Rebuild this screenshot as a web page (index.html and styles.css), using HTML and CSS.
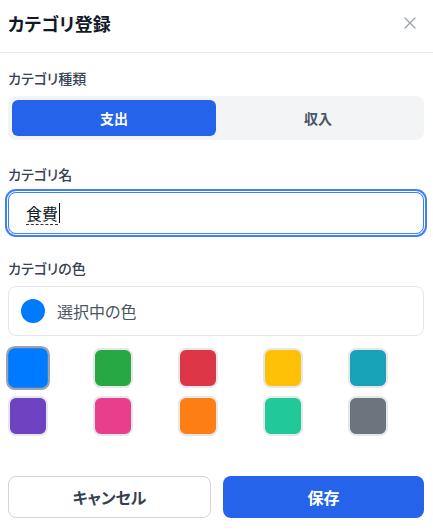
FILE: index.html
```html
<!DOCTYPE html>
<html lang="ja">
<head>
<meta charset="utf-8">
<title>カテゴリ登録</title>
<link rel="stylesheet" href="styles.css">
</head>
<body>
<div class="modal">
  <header class="modal-header">
    <h2 class="modal-title">カテゴリ登録</h2>
    <button class="close-btn" aria-label="閉じる">
      <svg width="12" height="12" viewBox="0 0 12 12"><path d="M1 1 L11 11 M11 1 L1 11" stroke="#9ca3af" stroke-width="1.4" fill="none" stroke-linecap="round"/></svg>
    </button>
  </header>
  <div class="modal-body">
    <section class="field">
      <div class="label">カテゴリ種類</div>
      <div class="segment">
        <button class="seg-btn active">支出</button>
        <button class="seg-btn">収入</button>
      </div>
    </section>
    <section class="field">
      <div class="label">カテゴリ名</div>
      <div class="input focused"><span class="composing">食費</span><span class="caret"></span></div>
    </section>
    <section class="field">
      <div class="label">カテゴリの色</div>
      <div class="color-preview">
        <span class="preview-dot"></span>
        <span class="preview-text">選択中の色</span>
      </div>
      <div class="swatches">
        <span class="swatch selected" style="background:#007bff"></span>
        <span class="swatch" style="background:#28a745"></span>
        <span class="swatch" style="background:#dc3545"></span>
        <span class="swatch" style="background:#ffc107"></span>
        <span class="swatch" style="background:#17a2b8"></span>
        <span class="swatch" style="background:#6f42c1"></span>
        <span class="swatch" style="background:#e83e8c"></span>
        <span class="swatch" style="background:#fd7e14"></span>
        <span class="swatch" style="background:#20c997"></span>
        <span class="swatch" style="background:#6c757d"></span>
      </div>
    </section>
  </div>
  <footer class="modal-footer">
    <button class="btn btn-cancel">キャンセル</button>
    <button class="btn btn-save">保存</button>
  </footer>
</div>
</body>
</html>
```
FILE: styles.css
```css
* { box-sizing: border-box; }
html, body { margin: 0; padding: 0; background: #fff; }
body {
  font-family: "Noto Sans CJK JP", "Noto Sans", sans-serif;
  font-feature-settings: "palt";
  color: #111827;
  width: 433px;
  height: 530px;
  overflow: hidden;
}
button { font-family: inherit; font-feature-settings: inherit; }
.modal-header {
  height: 53px;
  padding: 0 11px 7px 8px;
  border-bottom: 1px solid #e5e7eb;
  display: flex;
  align-items: center;
  justify-content: space-between;
}
.modal-title {
  margin: 0;
  font-size: 18px;
  font-weight: 700;
  line-height: 26px;
  color: #111827;
}
.close-btn {
  border: 0;
  background: transparent;
  width: 24px;
  height: 24px;
  padding: 0;
  display: flex;
  align-items: center;
  justify-content: center;
}
.modal-body {
  padding: 15px 9px 0 8px;
  display: flex;
  flex-direction: column;
  gap: 24px;
}
.field { display: flex; flex-direction: column; }
.label {
  font-size: 14px;
  line-height: 20px;
  font-weight: 500;
  color: #374151;
  margin-bottom: 8px;
}
.segment {
  background: #f3f4f6;
  border-radius: 8px;
  padding: 4px;
  display: flex;
  height: 44px;
}
.seg-btn {
  flex: 1;
  border: 0;
  background: transparent;
  border-radius: 6px;
  font-size: 14px;
  font-weight: 700;
  color: #4b5563;
}
.seg-btn.active { background: #2563eb; color: #fff; }
.input {
  height: 42px;
  border: 1px solid #3b82f6;
  border-radius: 8px;
  padding: 0 16px 0 17px;
  display: flex;
  align-items: center;
  font-size: 16px;
  color: #111827;
}
.input.focused { box-shadow: 0 0 0 1px #fff, 0 0 0 3px #3b82f6; }
.composing {
  line-height: 22px;
  border-bottom: 1px dashed #333;
}
.caret {
  display: inline-block;
  width: 1px;
  height: 20px;
  background: #111;
  margin-left: 1px;
}
.color-preview {
  height: 50px;
  border: 1px solid #e5e7eb;
  border-radius: 8px;
  padding: 0 12px;
  display: flex;
  align-items: center;
  gap: 12px;
}
.preview-dot {
  width: 24px;
  height: 24px;
  border-radius: 50%;
  background: #007bff;
}
.preview-text {
  font-size: 16px;
  color: #4b5563;
}
.swatches {
  margin-top: 12px;
  display: grid;
  grid-template-columns: repeat(5, 40px);
  column-gap: 45px;
  row-gap: 8px;
}
.swatch {
  width: 40px;
  height: 40px;
  border-radius: 8px;
  border: 2px solid #e5e7eb;
}
.swatch.selected {
  border-color: #9ca3af;
  transform: scale(1.1);
}
.modal-footer {
  margin-top: 40px;
  padding: 0 9px 0 8px;
  display: flex;
  gap: 12px;
}
.btn {
  flex: 1;
  height: 42px;
  border-radius: 8px;
  font-size: 16px;
  font-weight: 700;
}
.btn-cancel {
  background: #fff;
  border: 1px solid #d1d5db;
  color: #374151;
}
.btn-save {
  background: #2563eb;
  border: 0;
  color: #fff;
}
```
